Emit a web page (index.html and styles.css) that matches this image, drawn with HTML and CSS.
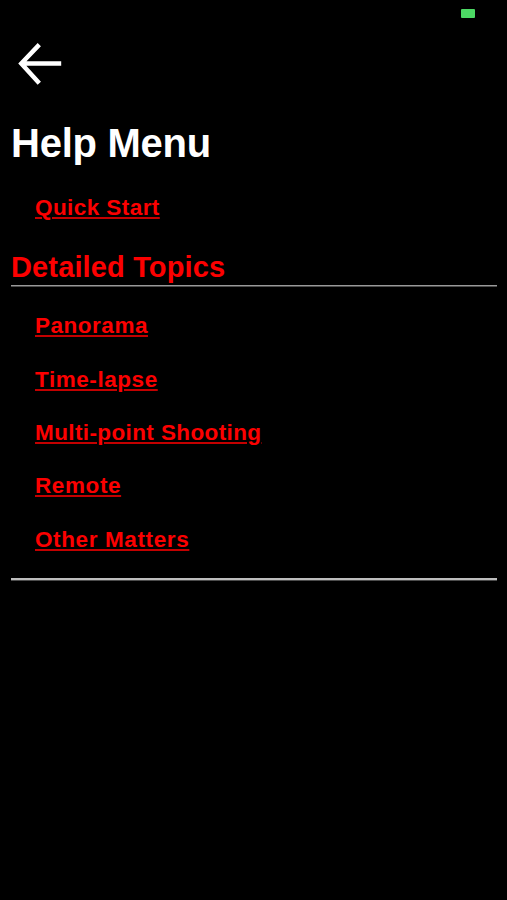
FILE: index.html
```html
<!DOCTYPE html>
<html lang="en">
<head>
<meta charset="utf-8">
<title>Help Menu</title>
<link rel="stylesheet" href="styles.css">
</head>
<body>
<header class="status"><span class="battery"></span></header>
<nav class="nav">
<svg class="back" viewBox="0 0 46 44" role="img" aria-label="Back"><path d="M23.3 2.6 5.3 21.5 23.3 41.2M5 21.4H45.2"/></svg>
</nav>
<main class="content">
<h1 class="title">Help Menu</h1>
<ul class="links quick"><li><a class="w-quick" href="#">Quick Start</a></li></ul>
<h2 class="section">Detailed Topics</h2>
<ul class="links topics">
<li><a class="w-pan" href="#">Panorama</a></li>
<li><a class="w-time" href="#">Time-lapse</a></li>
<li><a class="w-multi" href="#">Multi-point Shooting</a></li>
<li><a class="w-remote" href="#">Remote</a></li>
<li><a class="w-other" href="#">Other Matters</a></li>
</ul>
</main>
</body>
</html>
```
FILE: styles.css
```css
* { box-sizing: border-box; }
body { margin: 0; height: 900px; background: #000; color: #fff; font-family: "Liberation Sans", Arial, sans-serif; font-weight: 700; overflow: hidden; }
.status { height: 26px; display: flex; justify-content: flex-end; align-items: center; padding-right: 32px; }
.battery { width: 14px; height: 9px; border-radius: 1px; background: #4cd964; }
.nav { height: 90px; padding: 16px 0 0 16px; }
.back { display: block; width: 46px; height: 44px; fill: none; stroke: #fff; stroke-width: 4.5; }
.content { padding: 0 10px 0 11px; }
.title { margin: 0; height: 54px; font-size: 40px; line-height: 54px; letter-spacing: -0.25px; }
.links { margin: 0; padding: 0 0 0 24px; list-style: none; }
.links li { height: 53.4px; line-height: 53.4px; font-size: 22.5px; }
.links a { color: #fc0000; text-decoration: underline #c40000; text-decoration-thickness: 1.5px; text-underline-offset: 2px; }
.w-quick { letter-spacing: 0.43px; }
.w-pan { letter-spacing: 0.52px; }
.w-time { letter-spacing: 0.56px; }
.w-multi { letter-spacing: 0.39px; }
.w-remote { letter-spacing: 0.6px; }
.w-other { letter-spacing: 0.62px; }
.quick { padding-top: 11px; height: 78px; }
.section { margin: 0; height: 38px; border-bottom: 1px solid #999; box-shadow: 0 1px #4c4c4c; color: #fc0000; font-size: 29px; line-height: 38px; letter-spacing: 0.14px; }
.topics { padding-top: 13.3px; height: 294px; border-bottom: 2px solid #bdbdbd; box-shadow: 0 1px #4c4c4c; }
```
